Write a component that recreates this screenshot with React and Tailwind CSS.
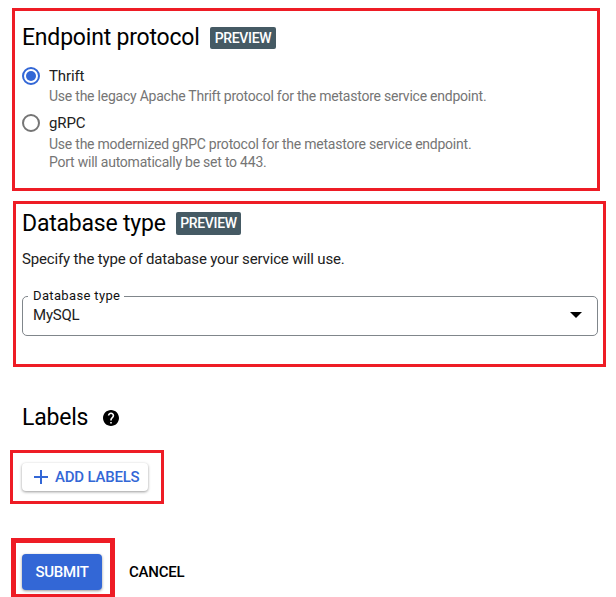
import React from "react";

function PreviewBadge({ className }) {
  return (
    <span
      className={`flex items-center justify-center rounded-[2px] bg-[#455a64] text-[14px] font-medium tracking-[-0.35px] text-white ${className}`}
    >
      PREVIEW
    </span>
  );
}

function Radio({ checked }) {
  return (
    <span
      className={`flex size-[18px] shrink-0 items-center justify-center rounded-full border-2 ${
        checked ? "border-[#3367d6]" : "border-[#757575]"
      }`}
    >
      {checked && <span className="size-[10px] rounded-full bg-[#3367d6]" />}
    </span>
  );
}

function Option({ label, checked, lines, className }) {
  return (
    <div>
      <div className="flex h-[18px] items-center gap-[9px]">
        <Radio checked={checked} />
        <span className="text-[15px] leading-[18px] tracking-[-0.12px] text-[#212121]">{label}</span>
      </div>
      <div className={`pl-[27px] text-[14px] leading-[18px] tracking-[-0.23px] text-[#757575] ${className}`}>
        {lines.map((line) => (
          <p key={line} className="whitespace-nowrap">{line}</p>
        ))}
      </div>
    </div>
  );
}

export default function App() {
  return (
    <main className="h-[597px] w-[616px] overflow-hidden bg-white pt-2 font-[Roboto,sans-serif] text-black">
      <section className="ml-3 h-[183px] w-[588px] border-[3px] border-[#ee1c25] pt-[9px] pl-[7px]">
        <div className="flex h-[34px] items-center">
          <h2 className="w-[188px] pt-[2px] text-[23px] leading-[34px] tracking-[-0.2px] whitespace-nowrap">
            Endpoint protocol
          </h2>
          <PreviewBadge className="mt-[2px] h-[22px] w-[66px]" />
        </div>
        <div className="flex flex-col gap-[9px] pt-[13px]">
          <Option
            label="Thrift"
            checked
            className="pt-[2px]"
            lines={["Use the legacy Apache Thrift protocol for the metastore service endpoint."]}
          />
          <Option
            label="gRPC"
            className="pt-[3px]"
            lines={[
              "Use the modernized gRPC protocol for the metastore service endpoint.",
              "Port will automatically be set to 443.",
            ]}
          />
        </div>
      </section>

      <section className="mt-[10px] ml-[13px] h-[166px] w-[593px] border-[3px] border-[#ee1c25] pt-[2px] pl-[6px]">
        <div className="flex h-[34px] items-center">
          <h2 className="w-[154px] pt-[2px] text-[23px] leading-[34px] tracking-[-0.2px] whitespace-nowrap">
            Database type
          </h2>
          <PreviewBadge className="h-[23px] w-[65px]" />
        </div>
        <p className="pt-[9px] text-[15px] leading-[20px] tracking-[-0.16px] text-[#212121]">
          Specify the type of database your service will use.
        </p>
        <fieldset className="mt-[20px] h-[47px] w-[576px] rounded-[5px] border border-[#80868b] pr-[15px] pl-[5px]">
          <legend className="h-[14px] pr-[4px] pl-[5px] text-[13px] leading-[14px] tracking-[0.35px] text-[#111]">
            Database type
          </legend>
          <div className="flex h-[24px] items-center justify-between pl-[5px]">
            <span className="text-[15px] leading-[20px] tracking-[-0.2px] text-[#212121]">MySQL</span>
            <svg className="h-[6px] w-[12px]" viewBox="0 0 12 6">
              <path d="M0 0h12L6 6z" fill="#000" />
            </svg>
          </div>
        </fieldset>
      </section>

      <div className="mt-[33px] ml-[22px] flex h-[34px] items-center">
        <h2 className="w-[81px] pt-[2px] text-[23px] leading-[34px] tracking-[-0.2px]">Labels</h2>
        <svg className="mt-[2px] size-[16px]" viewBox="2 2 20 20">
          <path
            fill="#000"
            d="M12 2C6.48 2 2 6.48 2 12s4.48 10 10 10 10-4.48 10-10S17.52 2 12 2zm1 17h-2v-2h2v2zm2.07-7.75l-.9.92C13.45 12.9 13 13.5 13 15h-2v-.5c0-1.1.45-2.1 1.17-2.83l1.24-1.26c.37-.36.59-.86.59-1.41 0-1.1-.9-2-2-2s-2 .9-2 2H8c0-2.21 1.79-4 4-4s4 1.79 4 4c0 .88-.36 1.68-.93 2.25z"
          />
        </svg>
      </div>

      <div className="mt-[16px] ml-[10px] h-[54px] w-[154px] border-[3px] border-[#ee1c25] pt-[10px] pl-[9px]">
        <button className="flex h-[28px] w-[126px] items-center rounded-[4px] bg-white pl-[12px] text-[15px] font-medium tracking-[-0.22px] text-[#3367d6] shadow-[0_1px_3px_rgba(0,0,0,0.4)]">
          <svg className="mr-[7px] size-[14px]" viewBox="0 0 14 14">
            <path d="M7 0v14M0 7h14" stroke="#3367d6" strokeWidth="2" />
          </svg>
          <span className="whitespace-nowrap">ADD LABELS</span>
        </button>
      </div>

      <div className="mt-[34px] ml-[11px] flex">
        <div className="h-[59px] w-[104px] border-[5px] border-b-[3px] border-[#ee1c25] pt-[11px] pl-[6px]">
          <button className="flex h-[36px] w-[80px] items-center justify-center rounded-[4px] bg-[#3367d6] text-[15px] font-medium tracking-[-0.25px] text-white shadow-[0_1px_3px_rgba(0,0,0,0.4)]">
            SUBMIT
          </button>
        </div>
        <button className="mt-[16px] ml-[14px] h-[36px] text-[15px] font-medium tracking-[-0.25px] text-black">
          CANCEL
        </button>
      </div>
    </main>
  );
}
